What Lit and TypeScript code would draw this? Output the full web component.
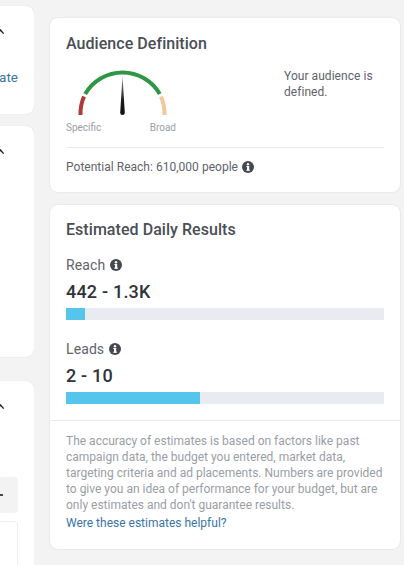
import { LitElement, html, css, svg } from "lit";
import { customElement } from "lit/decorators.js";

const info = html`<svg class="info" viewBox="0 0 12 12" aria-hidden="true"><circle cx="6" cy="6" r="6" fill="#444950"/><rect x="5" y="5" width="2.2" height="4.6" fill="#fff"/><rect x="4.3" y="5" width="1.6" height="1" fill="#fff"/><rect x="4.3" y="8.7" width="3.6" height="1" fill="#fff"/><circle cx="6" cy="3.3" r="1.2" fill="#fff"/></svg>`;
const chevron = html`<svg class="chev" viewBox="0 0 10 6" aria-hidden="true"><path d="M-3 5 L0.5 1 L3.6 4.6" fill="none" stroke="#1c1e21" stroke-width="1.4"/></svg>`;

@customElement("app-root")
export class AppRoot extends LitElement {
  static styles = css`
    :host { display: block; width: 404px; height: 565px; overflow: hidden; background: #f3f3f3; font-family: Roboto, "Liberation Sans", sans-serif; color: #444950; }
    .page { display: flex; gap: 16px; height: 565px; overflow: hidden; }
    .left { width: 34px; flex: none; display: flex; flex-direction: column; overflow: hidden; padding-top: 6px; box-sizing: border-box; }
    .lcard { background: #fff; margin-left: -20px; width: 54px; box-sizing: border-box; border-radius: 8px; box-shadow: 0 0 1px rgba(0,0,0,.18); flex: none; position: relative; padding-top: 23px; }
    .l1 { height: 108px; margin-bottom: 12px; }
    .l2 { height: 231px; margin-bottom: 24px; }
    .l3 { height: 200px; }
    .chev { display: block; width: 10px; height: 6px; margin-left: 20px; }
    .ate { font-size: 13.5px; line-height: 16px; color: #3a74a8; text-align: right; padding-right: 16px; margin-top: 34px; }
    .grey { width: 38px; height: 36px; background: #f3f3f3; border-radius: 0 4px 4px 0; margin-top: 67px; display: flex; align-items: center; justify-content: flex-end; padding-right: 1px; box-sizing: border-box; }
    .grey i { display: block; width: 5px; height: 1.5px; background: #444950; margin-right: 14px; }
    .box { width: 38px; height: 80px; border: 1px solid #eceef0; border-radius: 0 4px 0 0; margin-top: 8px; box-sizing: border-box; }
    .right { width: 350px; flex: none; display: flex; flex-direction: column; gap: 13px; padding-top: 18px; box-sizing: border-box; }
    .card { background: #fff; border-radius: 8px; box-shadow: 0 0 2px rgba(0,0,0,.12); }
    .aud { height: 174px; padding: 16px 16px 0; box-sizing: border-box; }
    h2 { margin: 0; font-size: 16px; line-height: 20px; font-weight: 500; color: #4a4e55; letter-spacing: .05px; }
    .meter { display: flex; justify-content: space-between; height: 81px; margin-top: 7px; }
    .gauge { width: 112px; height: 64px; flex: none; display: block; }
    .gauge-wrap { display: flex; flex-direction: column; }
    .scale { display: flex; justify-content: space-between; width: 110px; font-size: 10px; line-height: 12px; color: #9a9ea5; margin-top: -3px; }
    .msg { width: 100px; font-size: 12px; line-height: 16px; margin-top: 7px; color: #5f636a; letter-spacing: .05px; }
    .reach { border-top: 1px solid #e9eaed; margin-top: 5px; padding-top: 11px; font-size: 12px; line-height: 16px; display: flex; align-items: center; gap: 4px; color: #5f636a; letter-spacing: .02px; }
    .info { width: 12px; height: 12px; flex: none; display: block; }
    .est { height: 344px; box-sizing: border-box; padding-top: 15px; }
    .pad { padding: 0 16px; }
    .label { font-size: 14px; line-height: 18px; display: flex; align-items: center; gap: 5px; color: #5f636a; letter-spacing: .1px; }
    .first { margin-top: 16px; }
    .val { font-size: 18px; line-height: 22px; font-weight: 500; color: #303338; margin-top: 7px; letter-spacing: .2px; }
    .track { height: 12px; background: #e9ebf0; margin-top: 5px; }
    .fill { height: 100%; background: #56c5ec; }
    .lead { margin-top: 20px; }
    .note { border-top: 1px solid #e9eaed; margin-top: 16px; padding: 12px 16px 0; font-size: 12px; line-height: 16px; color: #9a9ea5; }
    .link { color: #3a74a8; display: block; margin-top: 2px; }
  `;

  render() {
    return html`<div class="page">
      <div class="left">
        <div class="lcard l1">${chevron}<div class="ate">ate</div></div>
        <div class="lcard l2">${chevron}</div>
        <div class="lcard l3">${chevron}<div class="grey"><i></i></div><div class="box"></div></div>
      </div>
      <div class="right">
        <section class="card aud">
          <h2>Audience Definition</h2>
          <div class="meter">
            <div class="gauge-wrap">
              <svg class="gauge" viewBox="0 0 112 64" aria-hidden="true">
                ${svg`<path d="M14.5 54 A43 43 0 0 1 18 35.5" fill="none" stroke="#b03a3a" stroke-width="4"/>
                <path d="M19.2 33 A43 43 0 0 1 93.8 33" fill="none" stroke="#2e9644" stroke-width="4"/>
                <path d="M95 35.5 A43 43 0 0 1 98.5 54" fill="none" stroke="#f3c99b" stroke-width="4"/>
                <defs><linearGradient id="n" x1="0" y1="0" x2="0" y2="1"><stop offset="0" stop-color="#8d949e"/><stop offset=".6" stop-color="#1c1e21"/><stop offset="1" stop-color="#0d0e10"/></linearGradient></defs>
                <path d="M56.5 15 L58.8 51.5 Q58.8 54 56.5 54 Q54.2 54 54.2 51.5 Z" fill="url(#n)"/>`}
              </svg>
              <div class="scale"><span>Specific</span><span>Broad</span></div>
            </div>
            <div class="msg">Your audience is defined.</div>
          </div>
          <div class="reach">Potential Reach: 610,000 people ${info}</div>
        </section>
        <section class="card est">
          <div class="pad">
            <h2>Estimated Daily Results</h2>
            <div class="label first">Reach ${info}</div>
            <div class="val">442 - 1.3K</div>
            <div class="track"><div class="fill" style="width:6%"></div></div>
            <div class="label lead">Leads ${info}</div>
            <div class="val">2 - 10</div>
            <div class="track"><div class="fill" style="width:42.1%"></div></div>
          </div>
          <div class="note">The accuracy of estimates is based on factors like past campaign data, the budget you entered, market data, targeting criteria and ad placements. Numbers are provided to give you an idea of performance for your budget, but are only estimates and don't guarantee results.<span class="link">Were these estimates helpful?</span></div>
        </section>
      </div>
    </div>`;
  }
}
